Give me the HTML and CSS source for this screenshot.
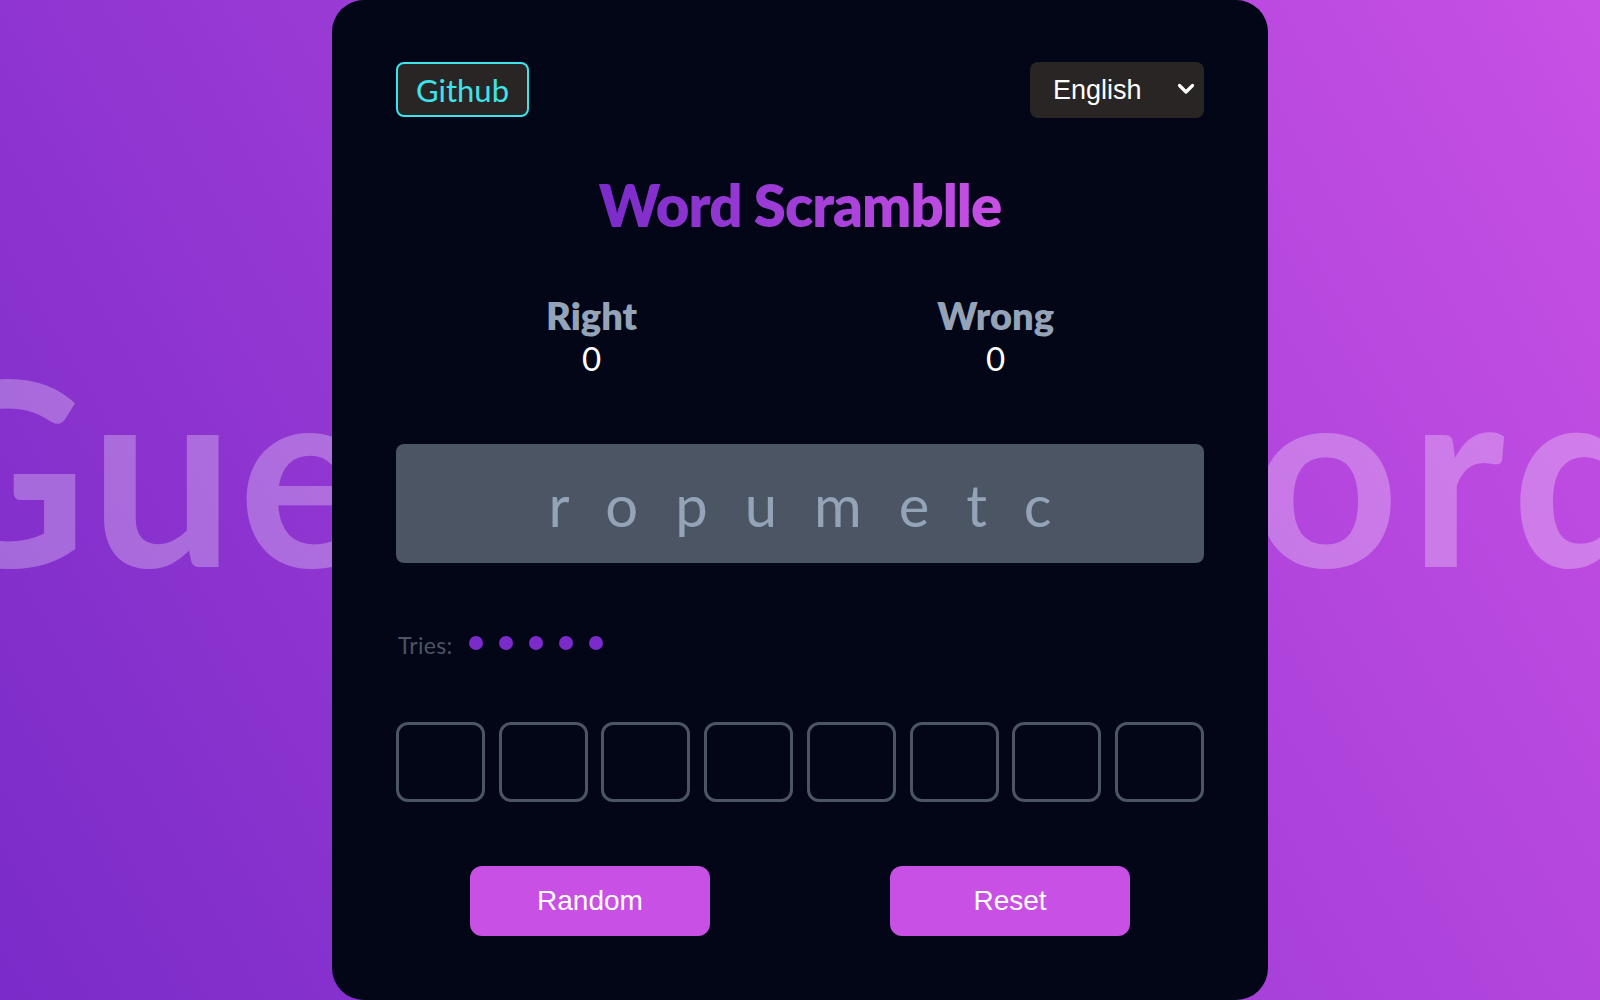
FILE: index.html
```html
<!DOCTYPE html>
<html lang="en">
<head>
<meta charset="utf-8">
<title>Word Scramblle</title>
<link rel="stylesheet" href="styles.css">
</head>
<body>
<div class="bg-text">Guess The <span class="bg-word">Word</span></div>
<main class="card">
  <header class="top">
    <a class="github" href="#">Github</a>
    <div class="lang">
      <select class="lang-select">
        <option>English</option>
        <option>Español</option>
      </select>
      <svg class="chev" width="18" height="12" viewBox="0 0 18 12"><path d="M2.5 2.5 L9 9 L15.5 2.5" fill="none" stroke="#ffffff" stroke-width="3.2" stroke-linecap="round" stroke-linejoin="round"/></svg>
    </div>
  </header>
  <h1 class="title">Word Scramblle</h1>
  <section class="stats">
    <div class="stat"><div class="stat-label">Right</div><div class="stat-num">0</div></div>
    <div class="stat"><div class="stat-label">Wrong</div><div class="stat-num">0</div></div>
  </section>
  <div class="scramble">ropumetc</div>
  <div class="tries">
    <span class="tries-label">Tries:</span>
    <span class="dot"></span><span class="dot"></span><span class="dot"></span><span class="dot"></span><span class="dot"></span>
  </div>
  <div class="slots">
    <input class="slot" maxlength="1"><input class="slot" maxlength="1"><input class="slot" maxlength="1"><input class="slot" maxlength="1"><input class="slot" maxlength="1"><input class="slot" maxlength="1"><input class="slot" maxlength="1"><input class="slot" maxlength="1">
  </div>
  <div class="actions">
    <button class="btn">Random</button>
    <button class="btn">Reset</button>
  </div>
</main>
</body>
</html>
```

FILE: styles.css
```css
* { box-sizing: border-box; }
html, body { margin: 0; padding: 0; }
body {
  width: 1600px;
  height: 1000px;
  overflow: hidden;
  position: relative;
  background: linear-gradient(60deg, #7a2bc9 0%, #c850e5 100%);
  font-family: "Lato", "Inter", sans-serif;
}
.bg-text {
  position: absolute;
  left: -98px;
  top: 318px;
  white-space: nowrap;
  font-family: "Lato", sans-serif;
  font-weight: 700;
  font-size: 256px;
  line-height: 300px;
  letter-spacing: 4px;
  word-spacing: -96px;
  color: rgba(255, 255, 255, 0.28);
  z-index: 0;
}
.bg-word {
  letter-spacing: 10px;
}
.card {
  position: relative;
  z-index: 1;
  width: 936px;
  height: 1000px;
  margin: 0 auto;
  background: #020617;
  border-radius: 32px;
  padding: 62px 64px 0;
  display: flex;
  flex-direction: column;
}
.top {
  display: flex;
  justify-content: space-between;
  align-items: flex-start;
  height: 56px;
}
.github {
  display: flex;
  align-items: center;
  height: 55px;
  width: 133px;
  justify-content: center;
  border: 2px solid #3fe3ea;
  border-radius: 8px;
  background: #292524;
  color: #3fe3ea;
  text-decoration: none;
  font-size: 31px;
  font-family: "Lato", sans-serif;
}
.lang {
  position: relative;
  width: 174px;
  height: 56px;
}
.lang-select {
  appearance: none;
  -webkit-appearance: none;
  width: 100%;
  height: 100%;
  border: none;
  border-radius: 8px;
  background: #292524;
  color: #ffffff;
  font-family: "Liberation Sans", Arial, sans-serif;
  font-size: 27px;
  padding: 0 0 0 23px;
  outline: none;
}
.chev {
  position: absolute;
  right: 9px;
  top: 21px;
  pointer-events: none;
}
.title {
  margin: 52px 0 0;
  text-align: center;
  font-size: 58px;
  line-height: 70px;
  font-weight: 800;
  letter-spacing: -1px;
  background: linear-gradient(to right, #7a2bc9, #c850e5);
  -webkit-background-clip: text;
  background-clip: text;
  color: transparent;
  align-self: center;
}
.stats {
  margin-top: 53px;
  display: flex;
  justify-content: space-around;
}
.stat {
  text-align: center;
}
.stat-label {
  font-size: 38px;
  line-height: 44px;
  font-weight: 800;
  color: #94a3b8;
}
.stat-num {
  font-size: 33px;
  line-height: 43px;
  color: #ffffff;
}
.scramble {
  margin-top: 64px;
  height: 119px;
  background: #4b5563;
  border-radius: 8px;
  display: flex;
  align-items: center;
  justify-content: center;
  color: #94a3b8;
  font-size: 58px;
  font-weight: 400;
  letter-spacing: 37px;
  text-indent: 37px;
  padding-top: 2px;
}
.tries {
  margin-top: 68px;
  height: 24px;
  display: flex;
  align-items: center;
  gap: 16px;
}
.tries-label {
  color: #4b5563;
  font-size: 23px;
  letter-spacing: 0.3px;
  padding-top: 4px;
  margin-left: 2px;
}
.dot {
  width: 14px;
  height: 14px;
  border-radius: 50%;
  background: #7a2bc9;
}
.slots {
  margin-top: 67px;
  display: flex;
  justify-content: space-between;
}
.slot {
  width: 89px;
  height: 80px;
  border: 3px solid #4b5563;
  border-radius: 12px;
  background: transparent;
  color: #ffffff;
  font-size: 32px;
  text-align: center;
  outline: none;
}
.actions {
  margin-top: 64px;
  display: flex;
  justify-content: center;
  gap: 180px;
}
.btn {
  width: 240px;
  height: 70px;
  border: none;
  border-radius: 12px;
  background: #c850e5;
  color: #ffffff;
  font-family: "Liberation Sans", Arial, sans-serif;
  font-size: 28px;
  cursor: pointer;
}
```
